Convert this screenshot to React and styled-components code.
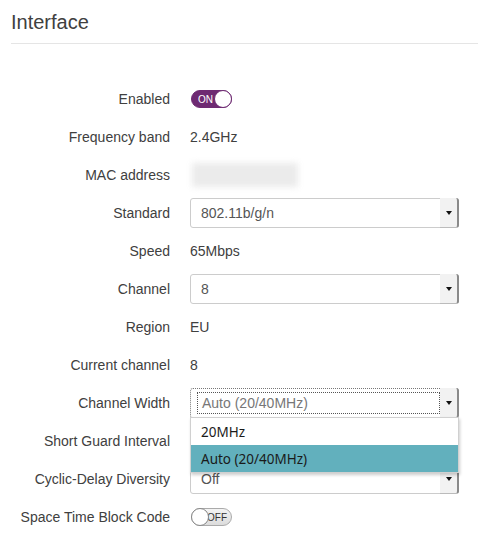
import React from "react";
import styled, { createGlobalStyle } from "styled-components";

const GlobalStyle = createGlobalStyle`
  html, body {
    margin: 0;
    padding: 0;
    background: #fff;
  }
  body {
    font-family: "Liberation Sans", Arial, sans-serif;
    color: #404040;
    font-size: 14px;
  }
`;

const Page = styled.div`
  width: 478px;
  height: 540px;
  overflow: hidden;
  padding: 0 0 0 11px;
  box-sizing: border-box;
`;

const Title = styled.h2`
  margin: 0;
  padding: 11px 0 10px;
  font-size: 20px;
  font-weight: normal;
  line-height: 22px;
  color: #404040;
  border-bottom: 1px solid #e5e5e5;
`;

const Form = styled.div`
  display: grid;
  grid-template-columns: 159px 1fr;
  grid-auto-rows: 38px;
  column-gap: 20px;
  padding: 36px 19px 0 0;
`;

const Label = styled.div`
  display: flex;
  align-items: center;
  justify-content: flex-end;
  color: #404040;
`;

const Value = styled.div`
  display: flex;
  align-items: center;
  position: relative;
  color: #404040;
`;

const Toggle = styled.div`
  position: relative;
  width: 41px;
  height: 18px;
  border-radius: 9px;
  box-sizing: border-box;
  display: flex;
  align-items: center;
  font-size: 10px;
  background: ${(p) => (p.$on ? "#6e2a72" : "linear-gradient(#f4f4f4, #dcdcdc)")};
  border: 1px solid ${(p) => (p.$on ? "#6e2a72" : "#aaa")};
  color: ${(p) => (p.$on ? "#fff" : "#333")};
  justify-content: ${(p) => (p.$on ? "flex-start" : "flex-end")};
  padding: ${(p) => (p.$on ? "0 0 0 6px" : "0 4px 0 0")};
  margin-left: 1px;
`;

const Knob = styled.span`
  position: absolute;
  top: -1px;
  ${(p) => (p.$on ? "right: -1px;" : "left: -1px;")}
  width: 18px;
  height: 18px;
  border-radius: 50%;
  background: #fff;
  box-sizing: border-box;
  border: 1px solid ${(p) => (p.$on ? "#6e2a72" : "#888")};
`;

const Select = styled.div`
  width: 100%;
  height: 30px;
  box-sizing: border-box;
  border: 1px ${(p) => (p.$focus ? "dotted #777" : "solid #ccc")};
  border-radius: 3px;
  display: flex;
  align-items: stretch;
  background: #fff;
  color: #555;
`;

const SelectText = styled.div`
  flex: 1;
  display: flex;
  align-items: center;
  margin: ${(p) => (p.$focus ? "3px 0 3px 6px" : "0")};
  padding-left: ${(p) => (p.$focus ? "4px" : "10px")};
  border: ${(p) => (p.$focus ? "1px dotted #555" : "none")};
  color: ${(p) => (p.$focus ? "#777" : "#555")};
`;

const Arrow = styled.div`
  width: 17px;
  background: #f2f2f2;
  border-right: 2px solid #8a8a8a;
  border-bottom: 1px solid #bbb;
  border-radius: 0 3px 3px 0;
  display: flex;
  align-items: center;
  justify-content: center;
  margin: -1px -1px -1px 0;
  &::after {
    content: "";
    border-left: 3px solid transparent;
    border-right: 3px solid transparent;
    border-top: 4px solid #111;
  }
`;

const Blur = styled.div`
  width: 106px;
  height: 24px;
  margin-left: 2px;
  background: #ebebeb;
  filter: blur(3px);
`;

const Menu = styled.ul`
  position: absolute;
  top: 33px;
  left: 0;
  right: 0;
  margin: 0;
  padding: 0;
  list-style: none;
  background: #fff;
  border: 1px solid #d0d0d0;
  box-shadow: 1px 2px 3px rgba(0, 0, 0, 0.2);
  z-index: 5;
  font-family: "Noto Sans", "Open Sans", sans-serif;
  font-size: 13.5px;
  color: #1a1a1a;
`;

const Option = styled.li`
  height: 27px;
  display: flex;
  align-items: center;
  padding-left: 10px;
  background: ${(p) => (p.$active ? "#62b0bd" : "#fff")};
`;

const Dropdown = ({ value, focus, children }) => (
  <>
    <Select $focus={focus}>
      <SelectText $focus={focus}>{value}</SelectText>
      <Arrow />
    </Select>
    {children}
  </>
);

export default function App() {
  return (
    <Page>
      <GlobalStyle />
      <Title>Interface</Title>
      <Form>
        <Label>Enabled</Label>
        <Value>
          <Toggle $on>
            ON
            <Knob $on />
          </Toggle>
        </Value>

        <Label>Frequency band</Label>
        <Value>2.4GHz</Value>

        <Label>MAC address</Label>
        <Value>
          <Blur />
        </Value>

        <Label>Standard</Label>
        <Value>
          <Dropdown value="802.11b/g/n" />
        </Value>

        <Label>Speed</Label>
        <Value>65Mbps</Value>

        <Label>Channel</Label>
        <Value>
          <Dropdown value="8" />
        </Value>

        <Label>Region</Label>
        <Value>EU</Value>

        <Label>Current channel</Label>
        <Value>8</Value>

        <Label>Channel Width</Label>
        <Value>
          <Dropdown value="Auto (20/40MHz)" focus>
            <Menu>
              <Option>20MHz</Option>
              <Option $active>Auto (20/40MHz)</Option>
            </Menu>
          </Dropdown>
        </Value>

        <Label>Short Guard Interval</Label>
        <Value>
          <Dropdown value="On" />
        </Value>

        <Label>Cyclic-Delay Diversity</Label>
        <Value>
          <Dropdown value="Off" />
        </Value>

        <Label>Space Time Block Code</Label>
        <Value>
          <Toggle>
            <Knob />
            OFF
          </Toggle>
        </Value>
      </Form>
    </Page>
  );
}
